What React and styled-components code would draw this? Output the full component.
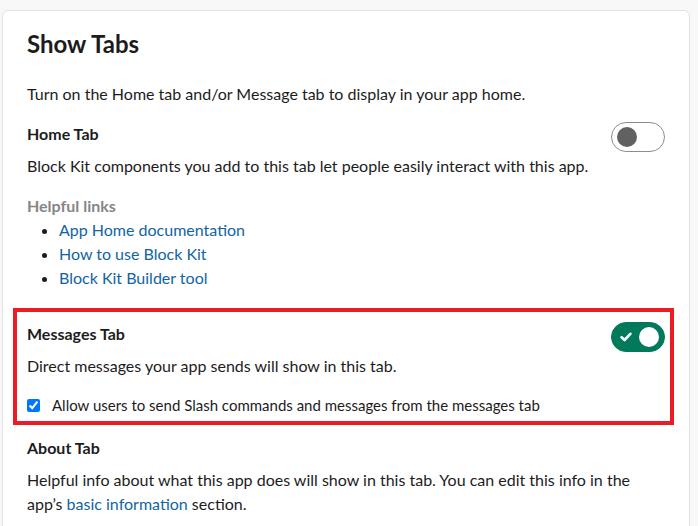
import React from 'react'
import styled, { createGlobalStyle } from 'styled-components'

const GlobalStyle = createGlobalStyle`
    body {
        margin: 0;
        background: #f8f8f8;
        font-family: Lato, "Open Sans", "Liberation Sans", sans-serif;
        color: #1d1c1d;
    }
`

const links = ['App Home documentation', 'How to use Block Kit', 'Block Kit Builder tool']

const Toggle = ({ on }) => (
    <Switch on={on}>
        {on && (
            <svg width="12" height="10" viewBox="0 0 12 10">
                <path d="M1.6 5.2 L4.6 8 L10.4 1.8" fill="none" stroke="#fff" strokeWidth="2.6" strokeLinecap="round" strokeLinejoin="round" />
            </svg>
        )}
        <Knob on={on} />
    </Switch>
)

export default function App() {
    return (
        <Page>
            <GlobalStyle />
            <Card>
                <Title>Show Tabs</Title>
                <Intro>Turn on the Home tab and/or Message tab to display in your app home.</Intro>

                <Row>
                    <SectionTitle>Home Tab</SectionTitle>
                    <Toggle on={false} />
                </Row>
                <Text>Block Kit components you add to this tab let people easily interact with this app.</Text>

                <LinksLabel>Helpful links</LinksLabel>
                <LinkList>
                    {links.map(l => (
                        <li key={l}><Link href="#">{l}</Link></li>
                    ))}
                </LinkList>

                <Highlight>
                    <Row>
                        <SectionTitle>Messages Tab</SectionTitle>
                        <Toggle on />
                    </Row>
                    <Text>Direct messages your app sends will show in this tab.</Text>
                    <CheckRow>
                        <input type="checkbox" defaultChecked />
                        <span>Allow users to send Slash commands and messages from the messages tab</span>
                    </CheckRow>
                </Highlight>

                <AboutTitle>About Tab</AboutTitle>
                <Text gap={8}>
                    Helpful info about what this app does will show in this tab. You can edit this info in the
                    app’s <Link href="#">basic information</Link> section.
                </Text>
            </Card>
        </Page>
    )
}

const Page = styled.div`
    padding: 10px 8px 0 2px;
`

const Card = styled.div`
    background: #fff;
    border: 1px solid #e2e2e2;
    border-radius: 6px;
    padding: 17px 24px 24px;
    font-size: 16px;
    line-height: 24px;
`

const Title = styled.h1`
    margin: 0;
    font-size: 24px;
    line-height: 32px;
    font-weight: 700;
`

const Intro = styled.p`
    margin: 22px 0 16px;
`

const Row = styled.div`
    display: flex;
    justify-content: space-between;
    align-items: flex-start;
`

const SectionTitle = styled.div`
    font-weight: 700;
`

const AboutTitle = styled(SectionTitle)`
    margin-top: 11px;
`

const Text = styled.p`
    margin: ${p => p.gap ?? 2}px 0 0;
`

const LinksLabel = styled.div`
    margin-top: 16px;
    font-weight: 700;
    color: #868686;
`

const LinkList = styled.ul`
    margin: 0;
    padding-left: 32px;
`

const Link = styled.a`
    color: #1264a3;
    text-decoration: none;
`

const Highlight = styled.div`
    margin: 18px -9px 0 -14px;
    border: 4px solid #ec1c24;
    padding: 10px 5px 4px 10px;
`

const CheckRow = styled.label`
    display: flex;
    align-items: center;
    gap: 12px;
    margin-top: 15px;
    font-size: 15px;

    input {
        margin: 0;
        width: 13px;
        height: 13px;
    }
`

const Switch = styled.div`
    box-sizing: border-box;
    width: 54px;
    height: 30px;
    border-radius: 15px;
    display: flex;
    align-items: center;
    justify-content: ${p => (p.on ? 'space-between' : 'flex-start')};
    padding: 0 5px 0 ${p => (p.on ? '8px' : '5px')};
    background: ${p => (p.on ? '#007a5a' : '#fff')};
    border: 1px solid ${p => (p.on ? '#007a5a' : '#8d8d8d')};
`

const Knob = styled.span`
    width: 20px;
    height: 20px;
    border-radius: 50%;
    background: ${p => (p.on ? '#fff' : '#616161')};
`
